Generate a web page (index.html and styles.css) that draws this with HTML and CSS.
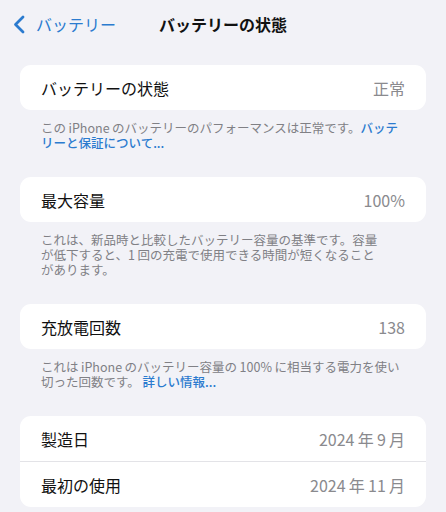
FILE: index.html
```html
<!DOCTYPE html>
<html lang="ja">
<head>
    <meta charset="UTF-8">
    <meta name="viewport" content="width=device-width,initial-scale=1.0">
    <title>バッテリーの状態</title>
    <link rel="stylesheet" href="styles.css">
</head>
<body>
<div class="page">
    <!--nav-->
    <header class="nav">
        <a class="nav_back" href="#">
            <svg class="nav_chevron" width="12" height="19" viewBox="0 0 12 19">
                <path d="M10 2 L2.5 9.5 L10 17" fill="none" stroke="currentColor" stroke-width="2.8" stroke-linecap="round" stroke-linejoin="round"/>
            </svg>
            <span>バッテリー</span>
        </a>
        <h1 class="nav_title">バッテリーの状態</h1>
    </header>
    <!--nav-->

    <section class="group">
        <ul class="card">
            <li class="row"><span class="row_label">バッテリーの状態</span><span class="row_value">正常</span></li>
        </ul>
        <p class="note">この&thinsp;iPhone&thinsp;のバッテリーのパフォーマンスは正常です。<a href="#">バッテ<br>リーと保証について...</a></p>
    </section>

    <section class="group">
        <ul class="card">
            <li class="row"><span class="row_label">最大容量</span><span class="row_value">100%</span></li>
        </ul>
        <p class="note">これは、新品時と比較したバッテリー容量の基準です。容量<br>が低下すると、1&thinsp;回の充電で使用できる時間が短くなること<br>があります。</p>
    </section>

    <section class="group">
        <ul class="card">
            <li class="row"><span class="row_label">充放電回数</span><span class="row_value">138</span></li>
        </ul>
        <p class="note">これは&thinsp;iPhone&thinsp;のバッテリー容量の&thinsp;100%&thinsp;に相当する電力を使い<br>切った回数です。 <a href="#">詳しい情報...</a></p>
    </section>

    <section class="group">
        <ul class="card">
            <li class="row"><span class="row_label">製造日</span><span class="row_value">2024&thinsp;年&thinsp;9&thinsp;月</span></li>
            <li class="row"><span class="row_label">最初の使用</span><span class="row_value">2024&thinsp;年&thinsp;11&thinsp;月</span></li>
        </ul>
    </section>
</div>
</body>
</html>
```

FILE: styles.css
```css
/*reset*/
html,body,div,p,h1,ul,li{margin:0;padding:0;}
ul,li{list-style:none;}
a{text-decoration:none;}
body{background:#f2f2f7;color:#000;font:normal 16px "Noto Sans CJK JP","Noto Sans",sans-serif;}

/*nav*/
.nav{position:relative;height:48px;margin-bottom:17px;display:flex;align-items:center;justify-content:center;}
.nav_back{position:absolute;left:13px;top:0;height:48px;display:flex;align-items:center;gap:11px;color:#2b7bcf;font-size:16px;}
.nav_chevron{display:block;margin-top:1px;}
.nav_title{font-size:16px;font-weight:bold;color:#111;}

/*groups*/
.group{margin:0 20px 27px;}
.card{background:#fff;border-radius:11px;overflow:hidden;}
.row{height:45px;display:flex;align-items:center;justify-content:space-between;padding:0 21px;}
.row + .row{border-top:1px solid #e3e3e7;}
.row_label{color:#111;}
.row_value{color:#8a8a8e;}
.note{padding:10px 0 0 21px;font-size:12.5px;line-height:15px;color:#808085;white-space:nowrap;}
.note a{color:#2b7bcf;font-weight:500;}
```
